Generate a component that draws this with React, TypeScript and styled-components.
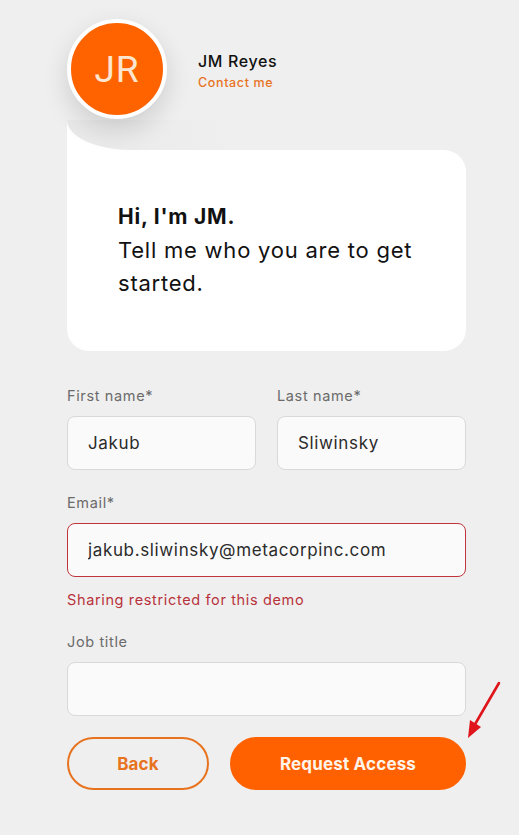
import React from 'react';
import styled, { createGlobalStyle } from 'styled-components';

const GlobalStyle = createGlobalStyle`
  html, body {
    margin: 0;
    padding: 0;
    background: #efefef;
  }
  body {
    font-family: Inter, "Open Sans", sans-serif;
    letter-spacing: 0.04em;
  }
`;

const Page = styled.div`
  position: relative;
  width: 519px;
  min-height: 835px;
  box-sizing: border-box;
  padding: 19px 0 0 67px;
`;

const Column = styled.div`
  width: 399px;
  display: flex;
  flex-direction: column;
`;

const Header = styled.div`
  display: flex;
  align-items: center;
  gap: 31px;
  position: relative;
  z-index: 2;
`;

const Avatar = styled.div`
  width: 92px;
  height: 92px;
  border-radius: 50%;
  border: 4px solid #fff;
  background: #fe6300;
  display: flex;
  align-items: center;
  justify-content: center;
  color: #fde6cf;
  font-family: Roboto, sans-serif;
  font-size: 37px;
  letter-spacing: 1px;
  box-shadow: 0 10px 26px rgba(0, 0, 0, 0.14);
`;

const NameBlock = styled.div`
  display: flex;
  flex-direction: column;
  gap: 4px;
  margin-top: 2px;
`;

const Name = styled.div`
  font-size: 16px;
  font-weight: 500;
  color: #111;
`;

const Contact = styled.a`
  font-size: 12.5px;
  font-weight: 500;
  color: #e8731f;
  text-decoration: none;
`;

const Bubble = styled.div`
  position: relative;
  margin-top: 31px;
  background: #fff;
  border-radius: 0 22px 22px 22px;
  padding: 50px 30px 51px 51px;
  font-size: 22px;
  line-height: 33px;
  letter-spacing: 0.035em;
  color: #111;

  &::before {
    content: '';
    position: absolute;
    left: 0;
    top: -30px;
    width: 90px;
    height: 31px;
    background: #fff;
  }
  &::after {
    content: '';
    position: absolute;
    left: 0;
    top: -30px;
    width: 220px;
    height: 30px;
    background: linear-gradient(90deg, #e9e9e9, #efefef 75%);
    border-bottom-left-radius: 64px 30px;
  }
`;

const Greeting = styled.div`
  font-weight: 700;
  font-size: 21px;
  line-height: 35px;
  margin-top: -1px;
`;

const Form = styled.div`
  display: flex;
  flex-direction: column;
  margin-top: 35px;
`;

const Row = styled.div`
  display: grid;
  grid-template-columns: 1fr 1fr;
  gap: 21px;
`;

const Field = styled.label<{ $mt?: number }>`
  display: flex;
  flex-direction: column;
  margin-top: ${(p) => p.$mt ?? 0}px;
`;

const Label = styled.span`
  font-size: 14.5px;
  line-height: 20px;
  color: #6b6b6b;
  margin-bottom: 10px;
`;

const Input = styled.input<{ $error?: boolean }>`
  box-sizing: border-box;
  height: 54px;
  width: 100%;
  border-radius: 8px;
  border: 1px solid ${(p) => (p.$error ? '#c0353d' : '#d9d9d9')};
  background: #fafafa;
  padding: 0 20px;
  font-family: inherit;
  letter-spacing: inherit;
  font-size: 17px;
  color: #2b2b2b;
  outline: none;
`;

const ErrorText = styled.div`
  margin-top: 13px;
  font-size: 14.5px;
  line-height: 20px;
  color: #b8323c;
`;

const Buttons = styled.div`
  display: grid;
  grid-template-columns: 142px 1fr;
  gap: 21px;
  margin-top: 21px;
`;

const Button = styled.button<{ $primary?: boolean }>`
  box-sizing: border-box;
  height: 53px;
  border-radius: 27px;
  font-family: inherit;
  font-size: 17px;
  font-weight: 700;
  letter-spacing: 0.01em;
  cursor: pointer;
  border: 2px solid ${(p) => (p.$primary ? '#ff6100' : '#e8731f')};
  background: ${(p) => (p.$primary ? '#ff6100' : 'transparent')};
  color: ${(p) => (p.$primary ? '#fff4ea' : '#e8731f')};
`;

const Arrow = styled.svg`
  position: absolute;
  left: 460px;
  top: 678px;
  width: 46px;
  height: 66px;
`;

export default function App() {
  return (
    <Page>
      <GlobalStyle />
      <Column>
        <Header>
          <Avatar>JR</Avatar>
          <NameBlock>
            <Name>JM Reyes</Name>
            <Contact href="#">Contact me</Contact>
          </NameBlock>
        </Header>

        <Bubble>
          <Greeting>Hi, I'm JM.</Greeting>
          Tell me who you are to get
          <br />
          started.
        </Bubble>

        <Form>
          <Row>
            <Field>
              <Label>First name*</Label>
              <Input defaultValue="Jakub" />
            </Field>
            <Field>
              <Label>Last name*</Label>
              <Input defaultValue="Sliwinsky" />
            </Field>
          </Row>
          <Field $mt={23}>
            <Label>Email*</Label>
            <Input $error defaultValue="jakub.sliwinsky@metacorpinc.com" />
          </Field>
          <ErrorText>Sharing restricted for this demo</ErrorText>
          <Field $mt={22}>
            <Label>Job title</Label>
            <Input />
          </Field>
          <Buttons>
            <Button>Back</Button>
            <Button $primary>Request Access</Button>
          </Buttons>
        </Form>
      </Column>

      <Arrow viewBox="0 0 46 66">
        <line x1="39" y1="5" x2="14" y2="48" stroke="#e0151b" strokeWidth="2.6" strokeLinecap="round" />
        <polygon points="8,60 10,42 21,49" fill="#e0151b" />
      </Arrow>
    </Page>
  );
}
